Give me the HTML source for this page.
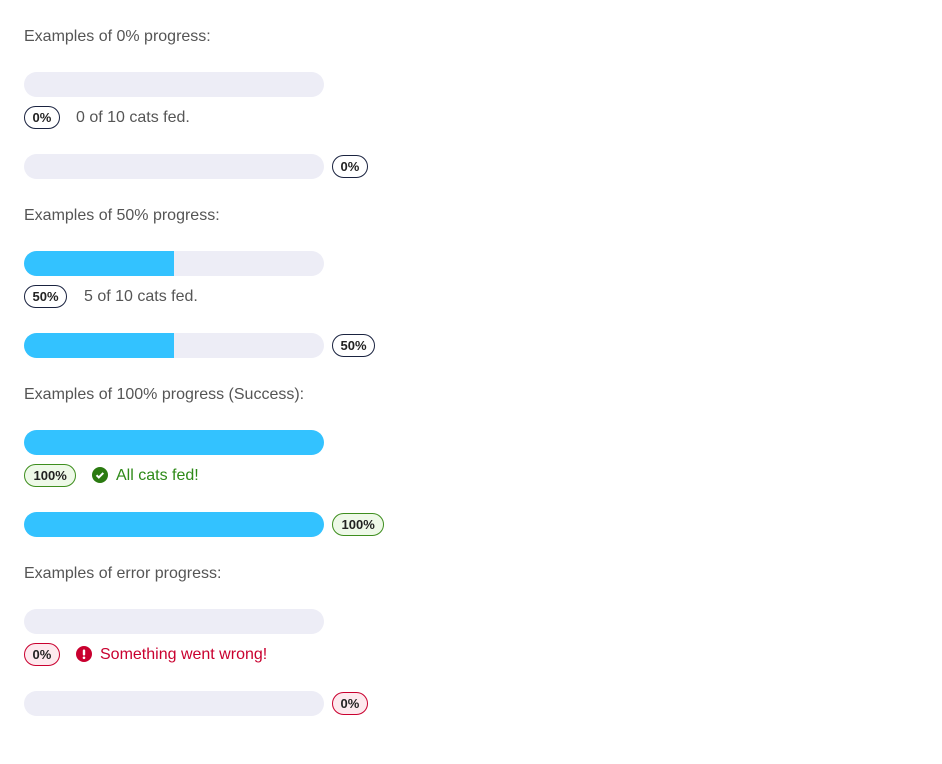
<!DOCTYPE html>
<html><head><meta charset="utf-8"><style>
body{margin:0;width:942px;height:764px;background:#fff;font-family:"Liberation Sans",sans-serif;position:relative;overflow:hidden}
.s{position:absolute;left:0;width:942px;height:179px}
.lbl{position:absolute;left:24px;top:27px;font-size:16px;line-height:20px;color:#555}
.bar{position:absolute;left:24px;width:300px;height:25px;border-radius:13px;background:#ededf6;overflow:hidden}
.fill{height:100%;background:#33c2ff}
.b1{top:72px}.b2{top:154px}
.badge{position:absolute;height:21px;line-height:21px;border:1px solid #1a2340;border-radius:12px;font-size:13px;font-weight:bold;color:#222;padding:0 7.5px;box-sizing:content-box;text-align:center}
.bd1{left:24px;top:106px}.bd2{left:332px;top:155px}
.ok{border-color:#3e8e1e;background:#eef9e8;padding:0 8.5px}
.er{border-color:#c9002f;background:#fde9ee}
.msg{position:absolute;top:108px;font-size:16px;line-height:20px;color:#555}
</style></head><body>
<div class="s" style="top:0">
<div class="lbl">Examples of 0% progress:</div>
<div class="bar b1"></div>
<div class="badge bd1">0%</div><div class="msg" style="left:76px">0 of 10 cats fed.</div>
<div class="bar b2"></div><div class="badge bd2">0%</div>
</div>
<div class="s" style="top:179px">
<div class="lbl">Examples of 50% progress:</div>
<div class="bar b1"><div class="fill" style="width:150px"></div></div>
<div class="badge bd1">50%</div><div class="msg" style="left:84px">5 of 10 cats fed.</div>
<div class="bar b2"><div class="fill" style="width:150px"></div></div><div class="badge bd2">50%</div>
</div>
<div class="s" style="top:358px">
<div class="lbl">Examples of 100% progress (Success):</div>
<div class="bar b1"><div class="fill" style="width:300px"></div></div>
<div class="badge bd1 ok">100%</div>
<svg style="position:absolute;left:92px;top:109px" width="16" height="16" viewBox="0 0 16 16"><circle cx="8" cy="8" r="8" fill="#2a7a10"/><path d="M4.5 8.2l2.3 2.3 4.5-4.6" stroke="#fff" stroke-width="2" fill="none"/></svg>
<div class="msg" style="left:116px;color:#2e8a18">All cats fed!</div>
<div class="bar b2"><div class="fill" style="width:300px"></div></div><div class="badge bd2 ok">100%</div>
</div>
<div class="s" style="top:537px">
<div class="lbl">Examples of error progress:</div>
<div class="bar b1"></div>
<div class="badge bd1 er">0%</div>
<svg style="position:absolute;left:76px;top:109px" width="16" height="16" viewBox="0 0 16 16"><circle cx="8" cy="8" r="8" fill="#c9002f"/><rect x="6.8" y="3.5" width="2.4" height="6" rx="1" fill="#fff"/><circle cx="8" cy="11.8" r="1.3" fill="#fff"/></svg>
<div class="msg" style="left:100px;color:#c9002f">Something went wrong!</div>
<div class="bar b2"></div><div class="badge bd2 er">0%</div>
</div>
</body></html>
